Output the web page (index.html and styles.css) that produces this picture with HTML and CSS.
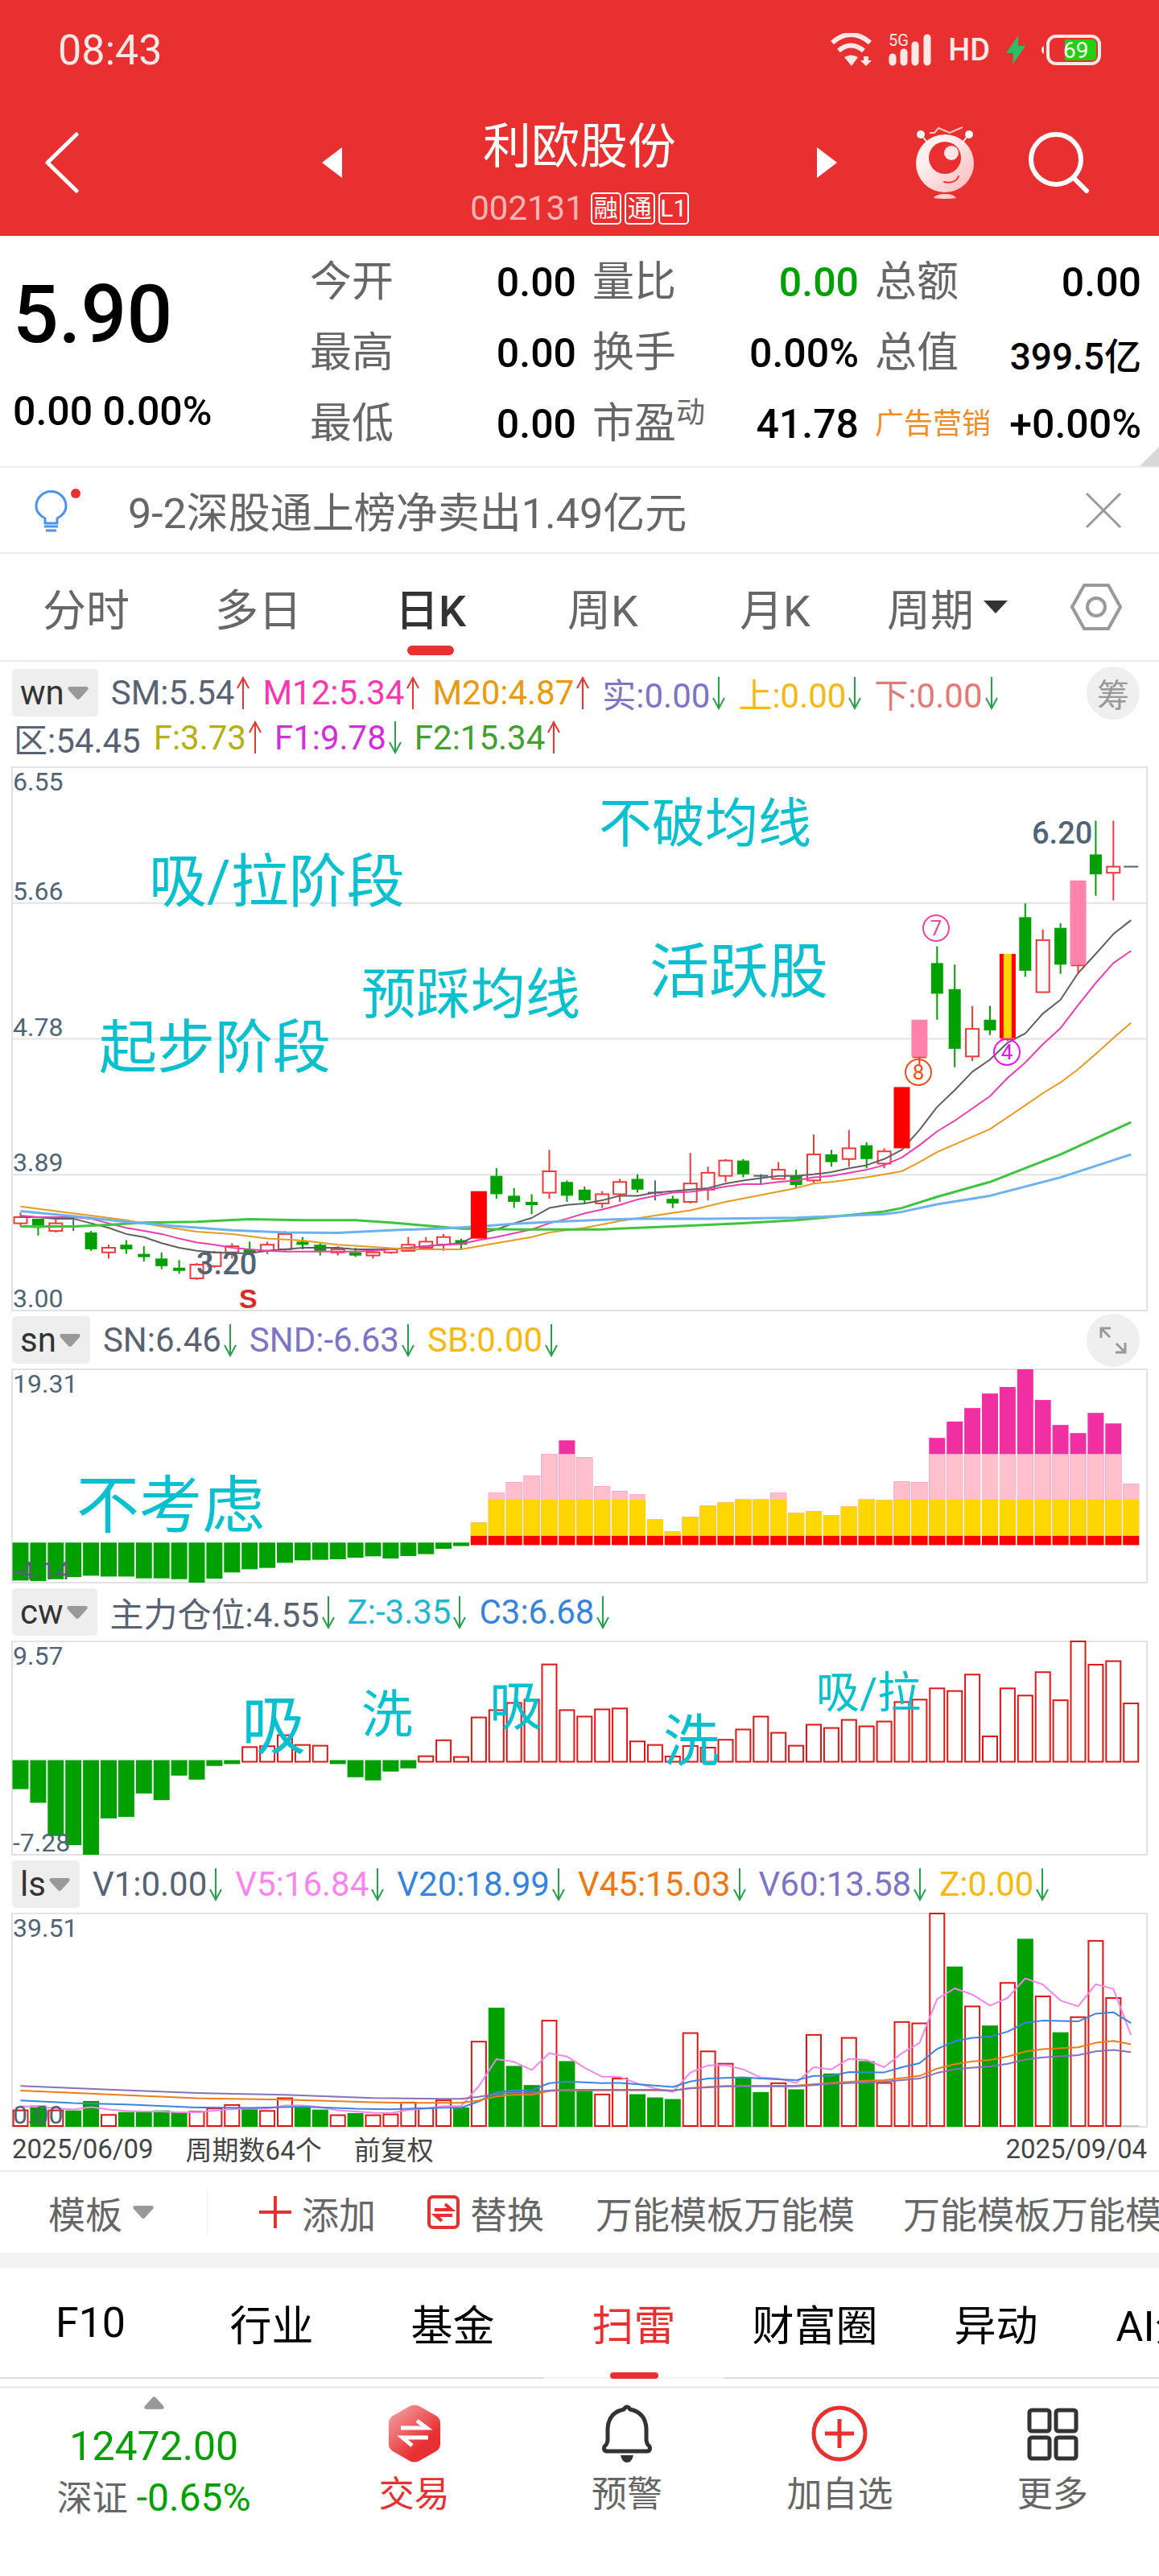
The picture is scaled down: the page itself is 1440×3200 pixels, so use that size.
FILE: index.html
```html
<!DOCTYPE html>
<html lang="zh-CN">
<head>
    <meta charset="UTF-8">
    <meta name="viewport" content="width=device-width, initial-scale=1.0">
    <title>利欧股份 002131</title>
    <link rel="stylesheet" href="styles.css">
</head>
<body>

    <svg class="sprite" aria-hidden="true">
        <symbol id="up" viewBox="0 0 16 42"><path d="M8 41V2M1 15L8 2l7 13" fill="none" stroke="currentColor" stroke-width="2"/></symbol>
        <symbol id="down" viewBox="0 0 16 42"><path d="M8 1v39M1 27l7 13 7-13" fill="none" stroke="currentColor" stroke-width="2"/></symbol>
        <symbol id="caret" viewBox="0 0 26 16"><path d="M3 0h20q4 0 2 4L15 15q-2 2-4 0L1 4Q-1 0 3 0z" fill="currentColor"/></symbol>
    </svg>

    <header class="header">
        <div class="status-bar">
            <span class="time">08:43</span>
            <div class="status-icons">
                <svg width="52" height="42" viewBox="0 0 52 42">
                    <path d="M2 12Q25-8 49 12" fill="none" stroke="#fde8e8" stroke-width="6"/>
                    <path d="M10 22Q25 9 41 22" fill="none" stroke="#fde8e8" stroke-width="6"/>
                    <path d="M17 30q8-5 17 0l-8 11z" fill="#fde8e8"/>
                    <path d="M41 29h6v5h4l-7 7-7-7h4z" fill="#fde8e8"/>
                </svg>
                <svg width="54" height="50" viewBox="0 0 54 50">
                    <path d="M5 34v6M19 28v12M33 19v21M48 10v30" stroke="#fde8e8" stroke-width="9" stroke-linecap="round"/>
                    <text x="0" y="20" class="signal-text">5G</text>
                </svg>
                <span class="hd">HD</span>
                <svg width="24" height="36" viewBox="0 0 24 36"><path d="M15 0L0 22h9L8 36l16-23h-9z" fill="#2fbd63"/></svg>
                <svg width="74" height="38" viewBox="0 0 74 38">
                    <path d="M3 14v10q-3-1-3-5t3-5z" fill="#fde8e8"/>
                    <rect x="8" y="2" width="64" height="34" rx="10" fill="none" stroke="#fde8e8" stroke-width="4"/>
                    <path d="M29 6h34q5 0 5 5v16q0 5-5 5H29z" fill="#22cf12"/>
                    <text x="27" y="29" class="battery-text">69</text>
                </svg>
            </div>
        </div>

        <nav class="title-bar">
            <button class="icon-btn back" aria-label="返回">
                <svg width="42" height="76" viewBox="0 0 42 76"><path d="M39 3L3 38l36 35" fill="none" stroke="#fff" stroke-width="5" stroke-linecap="round" stroke-linejoin="round"/></svg>
            </button>
            <div class="stock">
                <button class="icon-btn" aria-label="上一只"><svg width="25" height="38" viewBox="0 0 25 38"><path d="M25 0v38L0 19z" fill="#fff"/></svg></button>
                <div class="stock-title">
                    <h1>利欧股份</h1>
                    <div class="stock-code">
                        <span>002131</span>
                        <span class="badge">融</span>
                        <span class="badge">通</span>
                        <span class="badge">L1</span>
                    </div>
                </div>
                <button class="icon-btn" aria-label="下一只"><svg width="25" height="38" viewBox="0 0 25 38"><path d="M0 0v38l25-19z" fill="#fff"/></svg></button>
            </div>
            <div class="title-actions">
                <button class="icon-btn" aria-label="助手">
                    <svg width="72" height="90" viewBox="0 0 72 90">
                        <defs><linearGradient id="ball" x1="0" y1="0" x2="1" y2="1"><stop offset="0.3" stop-color="#fff0f0"/><stop offset="1" stop-color="#ffb8ba"/></linearGradient></defs>
                        <circle cx="36" cy="46" r="36" fill="url(#ball)"/>
                        <path d="M7 11l8 10M65 11l-8 10" stroke="#fff" stroke-width="2"/>
                        <circle cx="6" cy="10" r="5" fill="#fff"/>
                        <circle cx="66" cy="10" r="5" fill="#fff"/>
                        <path d="M17 8h6l5-6 14 6L58 1" fill="none" stroke="#ffc4c4" stroke-width="2"/>
                        <circle cx="36" cy="39" r="20" fill="#e93030"/>
                        <circle cx="44" cy="33" r="9" fill="#ffe6e6"/>
                        <path d="M35 69q14 3 18-7" fill="none" stroke="#e93030" stroke-width="2" stroke-linecap="round"/>
                        <path d="M22 89q3-5 14-5t14 5q-14 2-28 0z" fill="#ffd0d0"/>
                    </svg>
                </button>
                <button class="icon-btn" aria-label="搜索">
                    <svg width="76" height="76" viewBox="0 0 76 76"><circle cx="34" cy="34" r="31" fill="none" stroke="#fff" stroke-width="6"/><path d="M56 57l16 16" stroke="#fff" stroke-width="6" stroke-linecap="round"/></svg>
                </button>
            </div>
        </nav>
    </header>

    <section class="quote">
        <div class="price-box">
            <strong class="price">5.90</strong>
            <span class="change">0.00 0.00%</span>
        </div>
        <dl class="stats">
            <div><dt>今开</dt><dd>0.00</dd></div>
            <div><dt>量比</dt><dd class="green">0.00</dd></div>
            <div><dt>总额</dt><dd>0.00</dd></div>
            <div><dt>最高</dt><dd>0.00</dd></div>
            <div><dt>换手</dt><dd>0.00%</dd></div>
            <div><dt>总值</dt><dd class="value-small">399.5亿</dd></div>
            <div><dt>最低</dt><dd>0.00</dd></div>
            <div><dt>市盈<small>动</small></dt><dd>41.78</dd></div>
            <div><dt class="industry">广告营销</dt><dd>+0.00%</dd></div>
        </dl>
    </section>

    <section class="news">
        <svg class="bulb" width="58" height="56" viewBox="0 0 58 56">
            <path d="M13 44v-6Q2 32 2 23a18 18 0 0 1 37 0q0 9-11 15v6zM12 48h17M14 53h13" fill="none" stroke="#4a93ee" stroke-width="3"/>
            <circle cx="51" cy="7" r="6" fill="#e93030"/>
        </svg>
        <a href="#news">9-2深股通上榜净卖出1.49亿元</a>
        <button class="icon-btn" aria-label="关闭">
            <svg width="46" height="46" viewBox="0 0 46 46"><path d="M2 2l42 42M44 2L2 44" stroke="#999" stroke-width="3"/></svg>
        </button>
    </section>

    <nav class="period-tabs">
        <button>分时</button>
        <button>多日</button>
        <button class="active">日K</button>
        <button>周K</button>
        <button>月K</button>
        <button>周期<svg width="30" height="16" viewBox="0 0 30 16"><path d="M0 0h30L15 16z" fill="#333"/></svg></button>
        <button aria-label="设置">
            <svg width="64" height="58" viewBox="0 0 64 58"><path d="M17 2h30l15 27-15 27H17L2 29z" fill="none" stroke="#999" stroke-width="4" stroke-linejoin="round"/><circle cx="32" cy="29" r="11" fill="none" stroke="#999" stroke-width="4"/></svg>
        </button>
    </nav>

    <main>
        <section class="panel">
            <div class="panel-head first">
                <button class="chip">wn<svg class="caret"><use href="#caret"/></svg></button>
                <span class="slate">SM:5.54<svg class="arrow up"><use href="#up"/></svg></span>
                <span class="pink">M12:5.34<svg class="arrow up"><use href="#up"/></svg></span>
                <span class="amber">M20:4.87<svg class="arrow up"><use href="#up"/></svg></span>
                <span class="purple">实:0.00<svg class="arrow down"><use href="#down"/></svg></span>
                <span class="yellow">上:0.00<svg class="arrow down"><use href="#down"/></svg></span>
                <span class="salmon">下:0.00<svg class="arrow down"><use href="#down"/></svg></span>
                <button class="round">筹</button>
            </div>
            <div class="panel-subhead">
                <span class="slate">区:54.45</span>
                <span class="olive">F:3.73<svg class="arrow up"><use href="#up"/></svg></span>
                <span class="magenta">F1:9.78<svg class="arrow down"><use href="#down"/></svg></span>
                <span class="leaf">F2:15.34<svg class="arrow up"><use href="#up"/></svg></span>
            </div>
            <svg class="chart" id="kline" viewBox="0 0 1410 675"></svg>
        </section>

        <section class="panel">
            <div class="panel-head">
                <button class="chip">sn<svg class="caret"><use href="#caret"/></svg></button>
                <span class="slate">SN:6.46<svg class="arrow down"><use href="#down"/></svg></span>
                <span class="purple">SND:-6.63<svg class="arrow down"><use href="#down"/></svg></span>
                <span class="yellow">SB:0.00<svg class="arrow down"><use href="#down"/></svg></span>
                <button class="round" aria-label="全屏">
                    <svg width="36" height="36" viewBox="0 0 36 36"><path d="M3 15V3h12M3 3l11 11M33 21v12H21M33 33L22 22" fill="none" stroke="#999" stroke-width="3"/></svg>
                </button>
            </div>
            <svg class="chart" id="sn" viewBox="0 0 1410 265"></svg>
        </section>

        <section class="panel">
            <div class="panel-head">
                <button class="chip">cw<svg class="caret"><use href="#caret"/></svg></button>
                <span class="slate">主力仓位:4.55<svg class="arrow down"><use href="#down"/></svg></span>
                <span class="teal">Z:-3.35<svg class="arrow down"><use href="#down"/></svg></span>
                <span class="blue">C3:6.68<svg class="arrow down"><use href="#down"/></svg></span>
            </div>
            <svg class="chart" id="cw" viewBox="0 0 1410 265"></svg>
        </section>

        <section class="panel">
            <div class="panel-head">
                <button class="chip">ls<svg class="caret"><use href="#caret"/></svg></button>
                <span class="slate">V1:0.00<svg class="arrow down"><use href="#down"/></svg></span>
                <span class="orchid">V5:16.84<svg class="arrow down"><use href="#down"/></svg></span>
                <span class="blue">V20:18.99<svg class="arrow down"><use href="#down"/></svg></span>
                <span class="orange">V45:15.03<svg class="arrow down"><use href="#down"/></svg></span>
                <span class="purple">V60:13.58<svg class="arrow down"><use href="#down"/></svg></span>
                <span class="yellow">Z:0.00<svg class="arrow down"><use href="#down"/></svg></span>
            </div>
            <svg class="chart" id="ls" viewBox="0 0 1410 265"></svg>
        </section>

        <div class="dates">
            <span>2025/06/09</span>
            <span>周期数64个</span>
            <span>前复权</span>
            <span class="date-end">2025/09/04</span>
        </div>
    </main>

    <div class="toolbar">
        <button class="template">模板<svg class="caret"><use href="#caret"/></svg></button>
        <button>
            <svg width="40" height="40" viewBox="0 0 40 40"><path d="M20 0v40M0 20h40" stroke="#e93030" stroke-width="4"/></svg>
            添加
        </button>
        <button>
            <svg width="40" height="42" viewBox="0 0 40 42"><rect x="2" y="2" width="36" height="38" rx="5" fill="none" stroke="#e93030" stroke-width="4"/><path d="M9 18h21l-8-7M31 25H10l8 7" fill="none" stroke="#e93030" stroke-width="4"/></svg>
            替换
        </button>
        <button class="custom">万能模板万能模</button>
        <button class="custom">万能模板万能模</button>
    </div>

    <nav class="info-tabs">
        <a href="#f10">F10</a>
        <a href="#industry">行业</a>
        <a href="#fund">基金</a>
        <a href="#risk" class="active">扫雷</a>
        <a href="#circle">财富圈</a>
        <a href="#moves">异动</a>
        <a href="#ai">AI分析</a>
    </nav>

    <footer class="bottom-nav">
        <a href="#index" class="index">
            <svg class="index-caret"><use href="#caret"/></svg>
            <span class="index-value">12472.00</span>
            <span class="index-change">深证 <em>-0.65%</em></span>
        </a>
        <a href="#trade" class="trade">
            <svg width="66" height="72" viewBox="0 0 66 72">
                <defs><linearGradient id="hex" x1="0" y1="0" x2="0.8" y2="1"><stop offset="0" stop-color="#f5aaaa"/><stop offset="0.75" stop-color="#e82f32"/></linearGradient></defs>
                <path d="M27 2q6-3 12 0l21 12q5 3 5 9v26q0 6-5 9L39 70q-6 3-12 0L6 58q-5-3-5-9V23q0-6 5-9z" fill="url(#hex)"/>
                <path d="M16 29h32L36 20M50 41H18l12 10" fill="none" stroke="#fff" stroke-width="5"/>
            </svg>
            交易
        </a>
        <a href="#alert">
            <svg width="66" height="72" viewBox="0 0 66 72"><path d="M29 6q4-6 8 0 19 4 20 24v13q0 6 4 9 2 6-4 6H9q-6 0-4-6 4-3 4-9V30Q10 10 29 6z" fill="none" stroke="#333" stroke-width="5" stroke-linejoin="round"/><path d="M25 63h16q-2 9-8 9t-8-9z" fill="#333"/></svg>
            预警
        </a>
        <a href="#watch">
            <svg width="70" height="72" viewBox="0 0 70 72"><circle cx="35" cy="36" r="32" fill="none" stroke="#e93030" stroke-width="5"/><path d="M35 18v36M17 36h36" stroke="#e93030" stroke-width="5"/></svg>
            加自选
        </a>
        <a href="#more">
            <svg width="66" height="72" viewBox="0 0 66 72"><g fill="none" stroke="#333" stroke-width="5"><rect x="4" y="7" width="25" height="26" rx="3"/><rect x="37" y="7" width="25" height="26" rx="3"/><rect x="4" y="41" width="25" height="26" rx="3"/><rect x="37" y="41" width="25" height="26" rx="3"/></g></svg>
            更多
        </a>
    </footer>

    <script src="charts.js"></script>
</body>
</html>
```

FILE: styles.css
```css
* {
    box-sizing: border-box;
}

body {
    margin: 0;
    background: #fff;
    color: #000;
    font-family: Roboto, "Noto Sans CJK SC", sans-serif;
    font-size: 40px;
    overflow-x: hidden;
}

button {
    border: none;
    background: none;
    padding: 0;
    margin: 0;
    font: inherit;
    color: inherit;
    white-space: nowrap;
    cursor: pointer;
}

a {
    color: inherit;
    text-decoration: none;
    white-space: nowrap;
}

svg {
    display: block;
    flex-shrink: 0;
}

.sprite {
    position: absolute;
    width: 0;
    height: 0;
}

.icon-btn {
    display: flex;
}

/* Header */
.header {
    background: #e93030;
    color: #fff;
    padding-bottom: 14px;
}

.status-bar {
    display: flex;
    justify-content: space-between;
    align-items: center;
    height: 124px;
    padding: 0 72px;
    color: #fde8e8;
}

.time {
    font-size: 52px;
}

.status-icons {
    display: flex;
    align-items: center;
    gap: 20px;
}

.hd {
    font-size: 38px;
    font-weight: 500;
}

.signal-text {
    font-size: 20px;
    fill: #fde8e8;
}

.battery-text {
    font-size: 28px;
    fill: #fff;
}

.title-bar {
    display: grid;
    grid-template-columns: 1fr 640px 1fr;
    align-items: center;
    height: 155px;
}

.back {
    padding-left: 56px;
}

.stock {
    display: flex;
    justify-content: space-between;
    align-items: center;
    height: 100%;
}

.stock-title {
    align-self: flex-end;
    display: flex;
    flex-direction: column;
    align-items: center;
    gap: 16px;
}

.stock-title h1 {
    margin: 0;
    font-size: 60px;
    font-weight: 400;
    line-height: 80px;
}

.stock-code {
    display: flex;
    align-items: center;
    gap: 4px;
    font-size: 42px;
    line-height: 40px;
    color: #f9b5b5;
}

.stock-code span:first-child {
    margin-right: 4px;
}

.badge {
    width: 38px;
    height: 40px;
    border: 2px solid #fff;
    border-radius: 5px;
    color: #fff;
    font-size: 30px;
    line-height: 36px;
    text-align: center;
}

.title-actions {
    display: flex;
    align-items: center;
    justify-content: flex-end;
    gap: 68px;
    padding-right: 86px;
}

/* Quote */
.quote {
    position: relative;
    display: grid;
    grid-template-columns: 349px 1fr;
    gap: 20px;
    padding: 14px 22px 8px 16px;
    border-bottom: 2px solid #ebebeb;
}

.quote::after {
    content: "";
    position: absolute;
    right: 0;
    bottom: 0;
    border-left: 24px solid transparent;
    border-bottom: 24px solid #d8d8d8;
}

.price-box {
    display: flex;
    flex-direction: column;
    white-space: nowrap;
}

.price {
    font-size: 100px;
    font-weight: 500;
    line-height: 168px;
}

.change {
    font-size: 50px;
    font-weight: 500;
    line-height: 72px;
}

.stats {
    display: grid;
    grid-template-columns: repeat(3, 1fr);
    column-gap: 20px;
    margin: 0;
}

.stats div {
    display: flex;
    justify-content: space-between;
    align-items: center;
    height: 88px;
    white-space: nowrap;
}

.stats dt {
    display: flex;
    font-size: 52px;
    line-height: 60px;
    color: #666;
}

.stats dt small {
    font-size: 36px;
    line-height: 32px;
}

.stats dt.industry {
    font-size: 36px;
    color: #f08c28;
}

.stats dd {
    margin: 0;
    font-size: 50px;
    font-weight: 500;
}

.stats dd.green {
    color: #00a000;
}

.stats dd.value-small {
    font-size: 46px;
}

/* News */
.news {
    display: flex;
    align-items: center;
    height: 107px;
    padding: 0 46px 0 43px;
    border-bottom: 2px solid #ebebeb;
    font-size: 52px;
    color: #666;
}

.news a {
    flex: 1;
    margin-left: 58px;
}

/* Period tabs */
.period-tabs {
    display: grid;
    grid-template-columns: repeat(6, 214fr) 156fr;
    height: 134px;
    border-bottom: 2px solid #ebebeb;
    font-size: 54px;
    color: #666;
}

.period-tabs button {
    position: relative;
    display: flex;
    justify-content: center;
    align-items: center;
    gap: 12px;
}

.period-tabs .active {
    color: #333;
    font-weight: 500;
}

.period-tabs .active::after {
    content: "";
    position: absolute;
    bottom: 6px;
    width: 58px;
    height: 12px;
    border-radius: 6px;
    background: #e93030;
}

/* Chart panels */
.panel {
    padding: 0 15px;
}

.panel-head,
.panel-subhead {
    display: flex;
    align-items: center;
    gap: 16px;
    white-space: nowrap;
    font-size: 42px;
}

.panel-head {
    height: 73px;
    padding-right: 9px;
}

.panel-head.first {
    height: 69px;
    padding-top: 8px;
}

.panel-subhead {
    height: 62px;
    padding: 0 2px 12px;
}

.panel-head span,
.panel-subhead span {
    display: flex;
    align-items: center;
    gap: 3px;
}

.chip {
    display: flex;
    align-items: center;
    gap: 4px;
    height: 59px;
    padding: 0 12px 0 10px;
    border-radius: 5px;
    background: #eee;
    color: #333;
}

.caret {
    width: 26px;
    height: 16px;
    color: #999;
}

.arrow {
    width: 16px;
    height: 42px;
}

.up {
    color: #e83434;
}

.down {
    color: #28a04a;
}

.round {
    display: flex;
    justify-content: center;
    align-items: center;
    width: 66px;
    height: 66px;
    margin-left: auto;
    border-radius: 50%;
    background: #efefef;
    color: #999;
    font-size: 40px;
}

.slate { color: #596273; }
.pink { color: #f838b0; }
.amber { color: #ea9a10; }
.purple { color: #7d74c4; }
.yellow { color: #f5b914; }
.salmon { color: #e27b78; }
.olive { color: #b5b014; }
.magenta { color: #d22fdc; }
.leaf { color: #41a02f; }
.teal { color: #1fb6ce; }
.blue { color: #3683de; }
.orchid { color: #f986ee; }
.orange { color: #ee7814; }

.chart {
    width: 100%;
    height: auto;
    overflow: visible;
}

.axis {
    font-size: 32px;
    fill: #506475;
}

.peak {
    font-size: 38px;
    font-weight: 500;
    fill: #506475;
}

.note {
    fill: #0bc0ce;
}

.sell {
    font-family: "Liberation Sans", Arial, sans-serif;
    font-size: 34px;
    font-weight: 700;
    fill: #d92b2b;
}

.mark {
    font-size: 26px;
    text-anchor: middle;
}

.dates {
    display: flex;
    align-items: center;
    gap: 40px;
    height: 54px;
    padding: 0 15px;
    font-size: 33px;
    color: #444;
    white-space: nowrap;
}

.date-end {
    margin-left: auto;
}

/* Template toolbar */
.toolbar {
    display: flex;
    align-items: center;
    height: 122px;
    padding-left: 60px;
    border-top: 2px solid #ebebeb;
    border-bottom: 20px solid #f3f3f3;
    font-size: 46px;
    color: #666;
    overflow: hidden;
}

.toolbar button {
    display: flex;
    align-items: center;
    gap: 13px;
    flex-shrink: 0;
    height: 54px;
    margin-right: 64px;
}

.toolbar .template {
    padding-right: 66px;
    border-right: 1px solid #eee;
}

.toolbar .custom {
    margin-right: 60px;
}

/* Info tabs */
.info-tabs {
    display: flex;
    height: 137px;
    overflow: hidden;
    font-size: 52px;
}

.info-tabs a {
    position: relative;
    display: flex;
    justify-content: center;
    align-items: center;
    flex: 0 0 225px;
    border-bottom: 2px solid #ddd;
}

.info-tabs .active {
    color: #e93030;
    border-bottom-color: #f3f3f3;
}

.info-tabs .active::after {
    content: "";
    position: absolute;
    bottom: -2px;
    width: 60px;
    height: 8px;
    border-radius: 4px;
    background: #e93030;
}

/* Bottom nav */
.bottom-nav {
    display: grid;
    grid-template-columns: 382fr repeat(4, 264fr);
    margin-top: 9px;
    padding-top: 10px;
    border-top: 3px solid #eee;
    font-size: 44px;
    color: #666;
}

.bottom-nav a {
    display: flex;
    flex-direction: column;
    align-items: center;
    gap: 10px;
    padding-top: 10px;
    line-height: 60px;
}

.bottom-nav .index {
    gap: 4px;
    padding-top: 0;
}

.index-caret {
    width: 25px;
    height: 16px;
    color: #999;
    transform: rotate(180deg);
}

.index-value {
    margin-top: 12px;
    font-size: 50px;
    color: #00a000;
}

.index-change em {
    font-style: normal;
    font-size: 48px;
    color: #00a000;
}

.bottom-nav .trade {
    color: #e93030;
}
```

FILE: charts.js
```js
const NS = "http://www.w3.org/2000/svg";
const GREEN = "#00a000";
const RED = "#ee3a3a";
const GREY = "#506475";
const W = 1410;

// centre of the i-th bar
function cx(i) {
    return 10.5 + 21.9 * i;
}

function add(svg, tag, attrs, text) {
    const el = document.createElementNS(NS, tag);
    for (const key in attrs) el.setAttribute(key, attrs[key]);
    if (text) el.textContent = text;
    svg.appendChild(el);
    return el;
}

function rect(svg, x, y, w, h, fill, stroke, sw) {
    add(svg, "rect", { x, y, width: w, height: Math.max(h, 1), fill, stroke: stroke || "none", "stroke-width": sw || 0 });
}

function line(svg, x1, y1, x2, y2, stroke, sw) {
    add(svg, "line", { x1, y1, x2, y2, stroke, "stroke-width": sw });
}

function curve(svg, points, y, color, sw) {
    const pts = points.map(p => cx(p[0]).toFixed(1) + "," + y(p[1]).toFixed(1)).join(" ");
    add(svg, "polyline", { points: pts, fill: "none", stroke: color, "stroke-width": sw, "stroke-linejoin": "round" });
}

function scale(max, min, h) {
    return v => (max - v) / (max - min) * h;
}

function frame(svg, h) {
    rect(svg, 0, 0, W, h, "none", "#e2e2e2", 2);
}

function note(svg, x, y, size, text) {
    add(svg, "text", { x, y, class: "note", "font-size": size }, text);
}

/* ---- K line ---- */
// type, high, body top, body bottom, low
const candles = [
    ["r",3.64,3.61,3.57,3.55],["g",3.60,3.60,3.54,3.49],["r",3.60,3.57,3.52,3.51],["n",3.60,3.55,3.55,3.52],
    ["g",3.52,3.51,3.40,3.39],["r",3.43,3.41,3.38,3.34],["g",3.46,3.43,3.40,3.37],["g",3.42,3.37,3.36,3.32],
    ["g",3.38,3.34,3.29,3.27],["g",3.33,3.28,3.26,3.24],["r",3.31,3.30,3.21,3.20],["r",3.39,3.38,3.29,3.28],
    ["r",3.44,3.42,3.38,3.34],["g",3.45,3.40,3.39,3.38],["r",3.45,3.43,3.39,3.37],["r",3.52,3.50,3.40,3.39],
    ["g",3.48,3.45,3.43,3.40],["g",3.44,3.43,3.39,3.36],["r",3.42,3.40,3.38,3.36],["g",3.41,3.38,3.37,3.35],
    ["r",3.39,3.38,3.36,3.34],["r",3.40,3.40,3.38,3.37],["r",3.48,3.43,3.39,3.39],["r",3.48,3.45,3.41,3.40],
    ["r",3.50,3.48,3.43,3.39],["g",3.47,3.46,3.43,3.40],["R",3.78,3.78,3.47,3.47],["g",3.93,3.88,3.76,3.73],
    ["g",3.80,3.75,3.71,3.67],["g",3.76,3.71,3.69,3.63],["r",4.05,3.91,3.77,3.73],["g",3.85,3.84,3.75,3.71],
    ["g",3.81,3.79,3.72,3.70],["r",3.78,3.76,3.70,3.67],["r",3.86,3.84,3.76,3.71],["g",3.89,3.86,3.79,3.77],
    ["n",3.85,3.77,3.77,3.72],["g",3.75,3.73,3.70,3.67],["r",4.03,3.83,3.71,3.70],["r",3.94,3.90,3.79,3.72],
    ["r",3.99,3.98,3.88,3.84],["g",3.99,3.98,3.89,3.87],["n",3.89,3.88,3.88,3.83],["r",3.97,3.92,3.86,3.86],
    ["g",3.92,3.88,3.82,3.80],["r",4.15,4.02,3.85,3.83],["g",4.05,4.02,3.97,3.94],["r",4.18,4.06,3.99,3.94],
    ["g",4.10,4.08,3.99,3.93],["r",4.06,4.04,3.96,3.93],["R",4.46,4.46,4.06,4.06],["P",4.90,4.90,4.66,4.60],
    ["g",5.38,5.27,5.07,4.90],["g",5.26,5.10,4.71,4.59],["r",4.99,4.84,4.66,4.63],["g",4.99,4.90,4.83,4.80],
    ["Y",5.33,5.33,4.78,4.76],["g",5.66,5.57,5.22,5.18],["r",5.49,5.42,5.08,5.08],["g",5.53,5.50,5.26,5.20],
    ["P",5.81,5.81,5.26,5.20],["g",6.20,5.98,5.85,5.71],["r",6.20,5.90,5.86,5.68],["n",5.90,5.90,5.90,5.90]
];

const sm = [3.61,3.61,3.60,3.60,3.57,3.54,3.50,3.48,3.44,3.41,3.39,3.38,3.375,3.375,3.39,3.40,3.41,3.41,3.41,3.40,3.40,3.40,3.41,3.42,3.43,3.44,3.50,3.53,3.57,3.605,3.67,3.69,3.70,3.72,3.75,3.75,3.77,3.78,3.79,3.80,3.83,3.85,3.865,3.88,3.88,3.89,3.905,3.93,3.95,3.99,4.05,4.18,4.33,4.44,4.56,4.64,4.75,4.81,4.94,5.03,5.205,5.33,5.46,5.55];
const m12 = [3.62,3.61,3.61,3.61,3.60,3.57,3.54,3.52,3.50,3.47,3.445,3.43,3.41,3.40,3.39,3.385,3.385,3.385,3.385,3.385,3.39,3.40,3.41,3.42,3.43,3.435,3.46,3.48,3.505,3.53,3.57,3.60,3.635,3.66,3.69,3.725,3.75,3.77,3.775,3.79,3.81,3.825,3.825,3.84,3.85,3.87,3.88,3.90,3.92,3.95,4.00,4.08,4.17,4.24,4.32,4.40,4.52,4.62,4.74,4.845,4.995,5.14,5.27,5.35];
const m20 = [[0,3.68],[2,3.65],[4,3.62],[6,3.59],[8,3.55],[10,3.515],[12,3.50],[14,3.47],[16,3.457],[18,3.43],[20,3.415],[22,3.40],[25,3.40],[26,3.42],[28,3.46],[29,3.48],[30,3.51],[32,3.54],[34,3.585],[36,3.62],[38,3.655],[40,3.71],[42,3.755],[44,3.80],[45,3.83],[46,3.84],[48,3.87],[50,3.91],[51,3.97],[52,4.035],[55,4.185],[57,4.34],[58,4.42],[59,4.49],[60,4.576],[61,4.676],[62,4.78],[63,4.88]];
const ma60 = [[0,3.55],[3,3.55],[5,3.56],[7,3.575],[10,3.58],[13,3.597],[16,3.59],[19,3.59],[21,3.575],[23,3.555],[25,3.535],[28,3.53],[33,3.53],[37,3.55],[41,3.57],[44,3.59],[47,3.624],[49,3.647],[50,3.67],[52,3.743],[55,3.84],[59,4.02],[63,4.23]];
const ma120 = [[0,3.65],[3,3.617],[6,3.58],[9,3.55],[12,3.525],[15,3.51],[18,3.508],[21,3.525],[24,3.537],[26,3.55],[28,3.567],[30,3.578],[33,3.593],[35,3.60],[39,3.60],[44,3.606],[47,3.62],[49,3.63],[50,3.645],[52,3.694],[55,3.75],[59,3.87],[63,4.02]];

function drawKline() {
    const svg = document.getElementById("kline");
    const h = 675;
    const y = scale(6.55, 3.00, h);
    frame(svg, h);
    [1, 2, 3].forEach(n => line(svg, 0, h / 4 * n, W, h / 4 * n, "#e2e2e2", 2));

    candles.forEach((c, i) => {
        const x = cx(i), hi = y(c[1]), top = y(c[2]), bottom = y(c[3]), lo = y(c[4]);
        if (c[0] === "g") {
            line(svg, x, hi, x, lo, GREEN, 2);
            rect(svg, x - 7.5, top, 15, Math.max(bottom - top, 4), GREEN);
        } else if (c[0] === "r") {
            line(svg, x, hi, x, top, RED, 2);
            line(svg, x, bottom, x, lo, RED, 2);
            rect(svg, x - 8, top, 16, bottom - top, "#fff", RED, 2);
        } else if (c[0] === "n") {
            line(svg, x, hi, x, lo, GREY, 2);
            line(svg, x - 9, top, x + 9, top, GREY, 2);
        }
    });

    const indexed = arr => arr.map((v, i) => [i, v]);
    curve(svg, indexed(sm), y, "#606060", 2);
    curve(svg, indexed(m12), y, "#ea3fae", 2);
    curve(svg, m20, y, "#e49b22", 2);
    curve(svg, ma60, y, "#3fc43f", 3);
    curve(svg, ma120, y, "#6cb2f2", 3);

    // signal candles lie over the averages
    candles.forEach((c, i) => {
        const x = cx(i), top = y(c[2]), bottom = y(c[3]);
        if (c[0] === "R") rect(svg, x - 10, top, 20, bottom - top, "#f00");
        if (c[0] === "P" || c[0] === "Y") {
            line(svg, x, bottom, x, y(c[4]), RED, 2);
            line(svg, x - 9, bottom + 1, x + 9, bottom + 1, RED, 2);
            rect(svg, x - 10, top, 20, bottom - top, c[0] === "P" ? "#ff82aa" : "#f00");
            if (c[0] === "Y") rect(svg, x - 5, top, 10, bottom - top, "#ffd700");
        }
    });

    note(svg, 170, 167, 72, "吸/拉阶段");
    note(svg, 108, 373, 72, "起步阶段");
    note(svg, 434, 306, 68, "预踩均线");
    note(svg, 729, 93, 66, "不破均线");
    note(svg, 792, 280, 74, "活跃股");

    [[1148, 200, "7", "#ec4899"], [1126, 379, "8", "#ea5014"], [1236, 354, "4", "#f012f0"]].forEach(m => {
        add(svg, "circle", { cx: m[0], cy: m[1], r: 16, fill: "none", stroke: m[3], "stroke-width": 2 });
        add(svg, "text", { x: m[0], y: m[1] + 9, class: "mark", fill: m[3] }, m[2]);
    });

    ["6.55", "5.66", "4.78", "3.89", "3.00"].forEach((t, n) => {
        add(svg, "text", { x: 1, y: n ? h / 4 * n - 4 : 29, class: "axis" }, t);
    });
    add(svg, "text", { x: 229, y: 630, class: "peak" }, "3.20");
    add(svg, "text", { x: 1267, y: 95, class: "peak" }, "6.20");
    add(svg, "text", { x: 282, y: 672, class: "sell" }, "S");
}

/* ---- SN ---- */
const sn = [-3.91,-3.97,-3.76,-3.53,-3.38,-3.47,-3.47,-3.67,-3.67,-3.76,-4.14,-3.7,-3.02,-2.67,-2.52,-1.96,-1.69,-1.63,-1.57,-1.4,-1.25,-1.49,-1.22,-1.01,-0.42,-0.12,
    2.45,5.73,6.89,7.6,10,11.5,9.64,6.44,5.91,5.58,2.8,1.47,3.07,4.31,4.67,5,5,5.73,3.51,3.69,3.25,4.22,5,4.93,6.97,6.89,11.77,13.57,15.05,16.65,17.36,19.31,15.94,13.19,12.3,14.52,13.36,6.71];

function drawSn() {
    const svg = document.getElementById("sn");
    const y = scale(19.31, -4.14, 265);
    frame(svg, 265);
    const layers = [[19.31, "#ef2fa2"], [10, "#ffc0cb"], [5, "#ffd700"], [1, "#f00"]];
    sn.forEach((v, i) => {
        const x = cx(i) - 10;
        if (v < 0) {
            rect(svg, x, y(0) - 3, 20, y(v) - y(0) + 3, GREEN);
            return;
        }
        layers.forEach(l => {
            const top = Math.min(v, l[0]);
            rect(svg, x, y(top), 20, y(0) - y(top), l[1]);
        });
    });
    note(svg, 80, 197, 78, "不考虑");
    add(svg, "text", { x: 1, y: 29, class: "axis" }, "19.31");
    add(svg, "text", { x: 1, y: 261, class: "axis" }, "-4.14");
}

/* ---- CW ---- */
const cw = [-2.1,-3.18,-5.8,-6.52,-7.28,-4.41,-4.29,-2.44,-2.97,-1.03,-1.35,-0.27,-0.12,1.22,1.29,2.16,1.39,1.33,-0.12,-1.16,-1.41,-0.71,-0.46,0.5,1.76,0.44,3.56,4.14,4.71,4.97,7.75,4.14,3.63,4.2,4.27,1.67,1.39,0.48,1.31,1.18,1.8,2.61,3.63,2.35,1.33,2.99,2.73,3.37,2.86,3.24,4.78,4.97,5.86,5.65,6.95,2.07,5.86,5.29,7.14,4.92,9.57,7.73,8.01,4.67];

function drawCw() {
    const svg = document.getElementById("cw");
    const y = scale(9.57, -7.28, 265);
    frame(svg, 265);
    cw.forEach((v, i) => {
        const x = cx(i) - 10;
        if (v < 0) rect(svg, x, y(0) - 3, 20, y(v) - y(0) + 3, GREEN);
        else rect(svg, x + 1, y(v), 18, y(0) - y(v) - 1, "#fff", "#dd1616", 2);
    });
    note(svg, 285, 133, 80, "吸");
    note(svg, 434, 113, 64, "洗");
    note(svg, 593, 104, 66, "吸");
    note(svg, 809, 149, 70, "洗");
    note(svg, 999, 83, 54, "吸/拉");
    add(svg, "text", { x: 1, y: 29, class: "axis" }, "9.57");
    add(svg, "text", { x: 1, y: 261, class: "axis" }, "-7.28");
}

/* ---- LS (volume) ---- */
const volume = [3.04,3.94,3.04,3.04,4.79,2.2,2.74,2.79,3.04,2.74,2.79,3.39,4.04,3.29,2.94,5.29,3.69,3.19,2.15,2.54,2.15,2.3,4.49,3.44,4.89,3.59,15.77,22.05,11.28,7.73,19.66,12.17,6.69,5.99,8.93,6.04,5.44,5.14,17.36,13.97,11.68,9.13,6.44,8.08,6.94,17.02,9.88,16.47,12.17,8.13,19.41,19.16,39.51,29.69,22.3,18.76,26.65,34.83,24.15,17.51,20.31,34.43,23.85,0.3];
const volumeUp = "rgrggrggggrrrgrrggrgrrrrrgrgggrggrrgggrrrggrgrgrgrrrrgrgrgrgrrrx";
const v5 = [3.79,3.69,3.44,3.19,3.64,3.19,2.94,2.84,2.84,2.69,2.69,2.99,3.29,3.39,3.34,3.94,3.94,3.64,3.04,2.84,2.59,2.54,3.14,3.34,3.84,3.84,7.53,12.52,12.03,10.53,13.62,13.02,10.93,9.28,9.23,8.03,7.13,6.44,10.03,11.38,11.43,10.63,9.13,8.93,8.13,11.03,10.63,12.62,12.37,11.03,13.62,15.52,23.65,25.65,24.5,22.45,23.85,27.49,26.35,23.4,22.3,26.4,25.55,16.97];
const v20 = [[0,4.89],[3,4.39],[6,4.14],[10,3.59],[13,3.49],[16,3.74],[19,3.34],[21,3.24],[24,3.54],[25,3.54],[26,4.69],[27,6.39],[28,6.74],[29,6.79],[30,8.08],[31,8.38],[33,8.08],[34,8.13],[36,7.63],[37,7.38],[38,8.38],[39,8.93],[41,9.18],[42,8.93],[44,8.63],[45,9.43],[46,9.43],[47,10.13],[49,10.08],[50,11.03],[51,11.78],[52,14.42],[53,15.87],[54,16.47],[55,16.72],[56,17.61],[57,19.26],[58,19.66],[60,19.51],[61,20.96],[62,21.21],[63,19.21]];
const v45 = [[0,6.69],[5,5.99],[10,5.29],[15,5.04],[20,4.54],[22,4.44],[25,4.44],[26,4.89],[27,5.64],[28,5.94],[29,5.94],[30,6.64],[31,6.79],[36,6.74],[37,6.69],[38,7.18],[40,7.58],[44,7.63],[46,8.13],[48,8.53],[49,8.63],[50,9.03],[51,9.43],[52,10.78],[53,11.58],[54,12.12],[55,12.37],[56,13.02],[57,13.92],[58,14.37],[60,14.72],[61,15.57],[62,15.92],[63,15.27]];
const v60 = [[0,7.58],[5,6.89],[10,6.24],[15,5.94],[20,5.34],[24,5.19],[25,5.19],[26,5.54],[27,6.09],[28,6.34],[29,6.34],[30,6.74],[31,6.84],[36,6.84],[37,6.69],[38,7.13],[40,7.48],[44,7.48],[46,7.98],[49,8.33],[50,8.63],[51,8.93],[52,9.98],[53,10.68],[54,10.98],[55,11.18],[56,11.68],[57,12.47],[58,12.87],[60,13.27],[61,13.97],[62,14.22],[63,13.82]];

function drawLs() {
    const svg = document.getElementById("ls");
    const y = scale(39.51, 0, 265);
    frame(svg, 265);
    volume.forEach((v, i) => {
        const x = cx(i) - 10;
        if (volumeUp[i] === "g") rect(svg, x, y(v), 20, 265 - y(v), GREEN);
        else if (volumeUp[i] === "r") rect(svg, x + 1, y(v), 18, 264 - y(v), "#fff", "#dd1616", 2);
        else rect(svg, x, y(v), 20, 265 - y(v), "#c4c4c4");
    });
    curve(svg, v5.map((v, i) => [i, v]), y, "#f087ea", 2);
    curve(svg, v20, y, "#3c84dc", 2);
    curve(svg, v45, y, "#ec7c1c", 2);
    curve(svg, v60, y, "#8672bc", 2);
    add(svg, "text", { x: 1, y: 29, class: "axis" }, "39.51");
    add(svg, "text", { x: 1, y: 261, class: "axis" }, "0.00");
}

drawKline();
drawSn();
drawCw();
drawLs();
```
